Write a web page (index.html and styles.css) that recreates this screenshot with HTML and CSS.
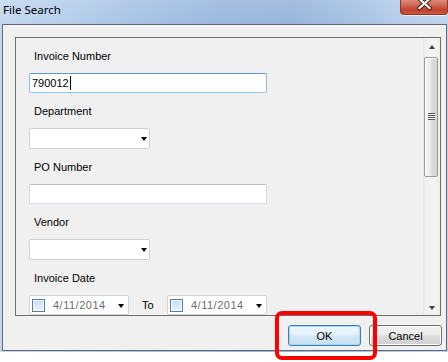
FILE: index.html
```html
<!DOCTYPE html>
<html>
<head>
<meta charset="utf-8">
<title>File Search</title>
<link rel="stylesheet" href="styles.css">
</head>
<body>
<div class="window">
  <div class="titlebar">
    <span class="title">File Search</span>
    <div class="close">
      <svg width="48" height="15" viewBox="0 0 48 15">
        <path d="M19.5 -1 L29.5 8 M29.5 -1 L19.5 8" stroke="#4a2018" stroke-width="4.2" stroke-linecap="square" fill="none"/>
        <path d="M19.5 -1 L29.5 8 M29.5 -1 L19.5 8" stroke="#ffffff" stroke-width="2.2" stroke-linecap="square" fill="none"/>
      </svg>
    </div>
  </div>
  <div class="client">
    <div class="panel">
      <div class="form">
        <div class="group">
          <div class="label">Invoice Number</div>
          <div class="textbox focused"><span class="value">790012</span><span class="caret"></span></div>
        </div>
        <div class="group">
          <div class="label">Department</div>
          <div class="combo"><span class="drop"></span></div>
        </div>
        <div class="group">
          <div class="label">PO Number</div>
          <div class="textbox"></div>
        </div>
        <div class="group">
          <div class="label">Vendor</div>
          <div class="combo"><span class="drop"></span></div>
        </div>
        <div class="group">
          <div class="label">Invoice Date</div>
          <div class="daterow">
            <div class="datepicker"><span class="check"></span><span class="date">4/11/2014</span><span class="drop"></span></div>
            <div class="to">To</div>
            <div class="datepicker"><span class="check"></span><span class="date">4/11/2014</span><span class="drop"></span></div>
          </div>
        </div>
      </div>
      <div class="vscroll">
        <div class="sbtn"><span class="tri-up"></span></div>
        <div class="thumb"><span class="grip"></span></div>
        <div class="track"></div>
        <div class="sbtn"><span class="tri-down"></span></div>
      </div>
    </div>
    <div class="buttons">
      <button class="btn default">OK</button>
      <button class="btn">Cancel</button>
    </div>
  </div>
</div>
<div class="highlight"></div>
</body>
</html>
```

FILE: styles.css
```css
html, body {
  margin: 0;
  padding: 0;
}
body {
  width: 448px;
  height: 362px;
  background: #ffffff;
  overflow: hidden;
  position: relative;
  font-family: "Liberation Sans", Arial, sans-serif;
  font-size: 11px;
  color: #000;
}
.window {
  width: 448px;
  height: 352px;
  display: flex;
  flex-direction: column;
  background:
    linear-gradient(180deg, rgba(255,255,255,0.12) 0px, rgba(255,255,255,0) 24px),
    linear-gradient(90deg, #c3d8ef 0px, #b7cfeb 60px, #a6c2e5 140px, #9bb8df 220px, #97b5dc 290px, #a4c0e3 350px, #b6cdea 400px, #c0d5ee 448px);
}
.titlebar {
  height: 24px;
  display: flex;
  align-items: flex-start;
  flex-shrink: 0;
}
.title {
  font-family: "Noto Sans", "Open Sans", sans-serif;
  font-size: 11.5px;
  line-height: 20px;
  margin-left: 3px;
  color: #000;
}
.close {
  margin-left: auto;
  width: 48px;
  height: 15px;
  box-sizing: border-box;
  border: 1px solid #8b3a2c;
  border-top: none;
  border-radius: 0 0 4px 4px;
  background: linear-gradient(180deg, #d98a79 0%, #d0644f 40%, #c5402a 70%, #c95a3f 100%);
  box-shadow: 0 1px 0 rgba(255,255,255,0.6);
  overflow: hidden;
}
.close svg {
  display: block;
  margin: 0 0 0 -1px;
}
.client {
  margin: 0 1px 1px 2px;
  height: 327px;
  box-sizing: border-box;
  border: 1px solid #646a70;
  background: #f0f0f0;
  display: flex;
  flex-direction: column;
  padding: 12px 0 0 12px;
}
.panel {
  width: 426px;
  height: 279px;
  box-sizing: border-box;
  border: 1px solid #6d6d6d;
  display: flex;
  overflow: hidden;
  flex-shrink: 0;
}
.form {
  flex: 1;
  padding: 11px 0 0 13px;
  overflow: hidden;
}
.group {
  margin-bottom: 11px;
}
.label {
  height: 14px;
  line-height: 14px;
  margin: 0 0 10px 5px;
  white-space: nowrap;
}
.textbox {
  width: 238px;
  height: 20px;
  box-sizing: border-box;
  background: #fff;
  border: 1px solid;
  border-color: #b9bcc3 #d6d9df #dde1e7 #d6d9df;
  border-radius: 2px;
  display: flex;
  align-items: center;
  padding-left: 2px;
}
.textbox.focused {
  border-color: #5c9ad6 #8fbbe6 #9cc4ea #8fbbe6;
}
.value {
  line-height: 14px;
}
.caret {
  display: inline-block;
  width: 1px;
  height: 14px;
  background: #000;
  margin-left: 1px;
}
.combo {
  width: 121px;
  height: 21px;
  box-sizing: border-box;
  background: #fff;
  border: 1px solid #cfd1d5;
  border-radius: 2px;
  display: flex;
  align-items: center;
  justify-content: flex-end;
  padding-right: 2px;
}
.drop {
  width: 0;
  height: 0;
  border-left: 3.5px solid transparent;
  border-right: 3.5px solid transparent;
  border-top: 4px solid #000;
}
.combo .drop {
  margin-top: 1px;
}
.daterow {
  display: flex;
  align-items: center;
}
.datepicker {
  width: 100px;
  height: 20px;
  box-sizing: border-box;
  background: #fff;
  border: 1px solid #d2d4d8;
  border-radius: 2px;
  display: flex;
  align-items: center;
  padding: 0 4px 0 2px;
}
.check {
  width: 13px;
  height: 13px;
  box-sizing: border-box;
  border: 1px solid #4f7fae;
  background: linear-gradient(180deg, #c4ddf5 0%, #d8e9f9 50%, #eaf3fc 100%);
  box-shadow: inset 0 0 0 1px #ffffff;
  flex-shrink: 0;
}
.date {
  margin-left: 8px;
  color: #6d6d6d;
  letter-spacing: 0.5px;
  white-space: nowrap;
}
.datepicker .drop {
  margin-left: auto;
  margin-top: 2px;
}
.to {
  width: 38px;
  box-sizing: border-box;
  padding-left: 13px;
}
.vscroll {
  width: 17px;
  flex-shrink: 0;
  display: flex;
  flex-direction: column;
  background: linear-gradient(90deg, #e6e6e6 0px, #f0f0f0 3px, #f4f4f4 12px, #ececec 17px);
}
.sbtn {
  height: 17px;
  flex-shrink: 0;
  display: flex;
  align-items: center;
  justify-content: center;
}
.tri-up {
  width: 0;
  height: 0;
  border-left: 3.5px solid transparent;
  border-right: 3.5px solid transparent;
  border-bottom: 4px solid #3f3f3f;
  margin-left: 1px;
}
.tri-down {
  width: 0;
  height: 0;
  border-left: 3.5px solid transparent;
  border-right: 3.5px solid transparent;
  border-top: 4px solid #3f3f3f;
  margin-left: 1px;
  margin-top: 2px;
}
.thumb {
  height: 120px;
  margin: 2px 2px 0 1px;
  box-sizing: border-box;
  border: 1px solid #9a9a9a;
  border-radius: 2px;
  background: linear-gradient(90deg, #f6f6f6 0%, #ececec 45%, #dcdcdc 55%, #d2d2d2 100%);
  box-shadow: inset 1px 1px 0 #ffffff;
  display: flex;
  align-items: center;
  justify-content: center;
  flex-shrink: 0;
}
.grip {
  width: 7px;
  height: 7px;
  background: repeating-linear-gradient(180deg, #5e5e5e 0px, #5e5e5e 1px, #e8e8e8 1px, #e8e8e8 2px);
  margin-bottom: 1px;
}
.track {
  flex: 1;
}
.buttons {
  display: flex;
  justify-content: flex-end;
  gap: 8px;
  margin-top: 9px;
  padding-right: 4px;
}
.btn {
  width: 73px;
  height: 21px;
  box-sizing: border-box;
  border: 1px solid #707070;
  border-radius: 3px;
  background: linear-gradient(180deg, #f2f2f2 0%, #ebebeb 48%, #dddddd 52%, #cfcfcf 100%);
  box-shadow: inset 0 0 0 1px #fcfcfc;
  font-family: "Liberation Sans", Arial, sans-serif;
  font-size: 11px;
  color: #000;
  padding: 0;
  margin: 0;
}
.btn.default {
  border-color: #3c7fb1;
  box-shadow: inset 0 0 0 1px #9fdaf6;
  background: linear-gradient(180deg, #eef7fc 0%, #e3f1fa 48%, #d4e8f5 52%, #c6dfef 100%);
}
.highlight {
  position: absolute;
  left: 275px;
  top: 311px;
  width: 102px;
  height: 49px;
  box-sizing: border-box;
  border: 4px solid #ff0000;
  border-radius: 7px;
}
```
